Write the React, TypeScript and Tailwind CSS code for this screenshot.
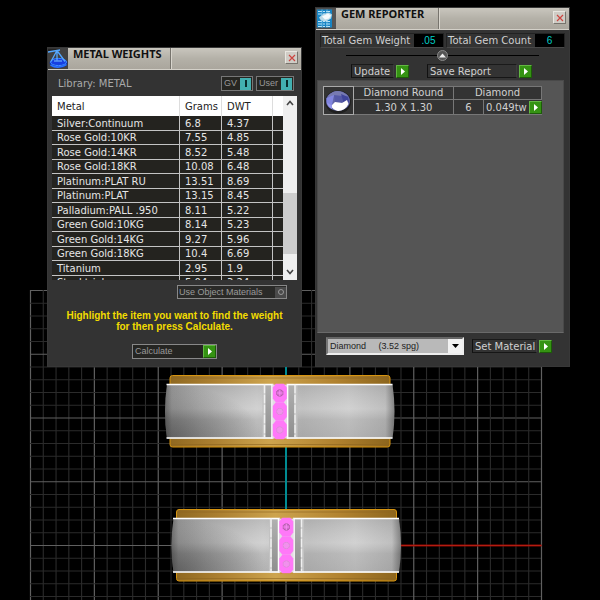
import { useState } from "react";
import type { ReactNode } from "react";

const metals = [
    { name: "Silver:Continuum", grams: "6.8", dwt: "4.37" },
    { name: "Rose Gold:10KR", grams: "7.55", dwt: "4.85" },
    { name: "Rose Gold:14KR", grams: "8.52", dwt: "5.48" },
    { name: "Rose Gold:18KR", grams: "10.08", dwt: "6.48" },
    { name: "Platinum:PLAT RU", grams: "13.51", dwt: "8.69" },
    { name: "Platinum:PLAT", grams: "13.15", dwt: "8.45" },
    { name: "Palladium:PALL .950", grams: "8.11", dwt: "5.22" },
    { name: "Green Gold:10KG", grams: "8.14", dwt: "5.23" },
    { name: "Green Gold:14KG", grams: "9.27", dwt: "5.96" },
    { name: "Green Gold:18KG", grams: "10.4", dwt: "6.69" },
    { name: "Titanium", grams: "2.95", dwt: "1.9" },
    { name: "Stocktrial", grams: "5.04", dwt: "3.24" },
];

// 40 minor cells, every fifth line is a major one
const gridLines = Array.from({ length: 41 }, (_, i) => i);

function Ring({ x, y }: { x: number; y: number }) {
    return (
        <g transform={`translate(${x} ${y})`}>
            {/* Gold rims */}
            <path d="M5.5 10V3.5Q5.5 1 8 1H223Q225.5 1 225.5 3.5V10Z" fill="url(#gold)" stroke="#d69410" />
            <path d="M5.5 64V70Q5.5 72.5 8 72.5H223Q225.5 72.5 225.5 70V64Z" fill="url(#gold)" stroke="#d69410" />
            <path d="M7 3.5H224M7 70H224" stroke="#8d6520" opacity=".6" />
            {/* Band */}
            <path d="M2.5 10Q-1.5 37 2.5 64H228Q232 37 228 10Z" fill="url(#band)" />
            <path d="M2.5 10Q-1.5 37 2.5 64H228Q232 37 228 10Z" fill="url(#bandShade)" />
            <path d="M2.5 10Q-1.5 37 2.5 64H98V10Z" fill="url(#bandCorner)" />
            <path d="M98 10H133V64H98Z" fill="#c2c2c2" />
            <path d="M101 11H107V63H101Z" fill="url(#slot)" />
            <path d="M124 11H130V63H124Z" fill="url(#slot)" />
            <path d="M2 10H228M2 63.5H228" stroke="#fff" strokeWidth="1.5" />
            <path d="M100 10V64M130.5 10V64" stroke="#f0f0f0" strokeWidth="1.5" strokeDasharray="9 1" />
            <path d="M107.5 10V64M123 10V64" stroke="#fff" strokeWidth="1.5" />
            {/* Stones */}
            <path d="M108 9.5H122.5V64.5H108Z" fill="#e4dae4" />
            <path d="M109 9.5H122M109 64.5H122" stroke="#c98b20" />
            {[18.5, 37, 55.5].map((cy, i) => (
                <g key={cy} transform={`translate(115.3 ${cy})`}>
                    <path d="M-4 -9.2H4L7 -5.5V5.5L4 9.2H-4L-7 5.5V-5.5Z" fill="#ff78f8" />
                    <path
                        d="M-1.5 -3H1.5L3 -1.5V1.5L1.5 3H-1.5L-3 1.5V-1.5Z"
                        fill={i === 0 ? "#d868d2" : "#ee94ea"}
                        stroke={i === 0 ? "#a8609f" : "#dd8ad8"}
                    />
                    <path d="M-3 0H3M0 -3V3" stroke="#f58cf0" />
                </g>
            ))}
        </g>
    );
}

function Viewport() {
    return (
        <svg className="absolute left-0 top-0" width="600" height="600" viewBox="0 0 600 600" aria-hidden="true">
            <defs>
                <linearGradient id="gold" x1="0" x2="1">
                    <stop offset="0" stopColor="#8f6820" />
                    <stop offset=".2" stopColor="#ac8031" />
                    <stop offset=".45" stopColor="#cda44e" />
                    <stop offset=".75" stopColor="#b1822f" />
                    <stop offset="1" stopColor="#8c651d" />
                </linearGradient>
                <linearGradient id="band" x1="0" x2="1">
                    <stop offset="0" stopColor="#606060" />
                    <stop offset=".03" stopColor="#939393" />
                    <stop offset=".15" stopColor="#adadad" />
                    <stop offset=".4" stopColor="#cfcfcf" />
                    <stop offset=".6" stopColor="#bdbdbd" />
                    <stop offset=".8" stopColor="#cfcfcf" />
                    <stop offset=".96" stopColor="#b8b8b8" />
                    <stop offset="1" stopColor="#6c6c6c" />
                </linearGradient>
                <linearGradient id="bandShade" x1="0" y1="0" x2="0" y2="1">
                    <stop offset="0" stopColor="#888" stopOpacity=".28" />
                    <stop offset=".45" stopColor="#ddd" stopOpacity=".2" />
                    <stop offset=".65" stopColor="#888" stopOpacity=".25" />
                    <stop offset="1" stopColor="#777" stopOpacity=".3" />
                </linearGradient>
                <radialGradient id="bandCorner" cx="0" cy="1" r="1">
                    <stop offset="0" stopColor="#333" stopOpacity=".5" />
                    <stop offset="1" stopColor="#333" stopOpacity="0" />
                </radialGradient>
                <linearGradient id="slot" x1="0" y1="0" x2="0" y2="1">
                    <stop offset="0" stopColor="#b0b0b0" />
                    <stop offset="1" stopColor="#8e8e8e" />
                </linearGradient>
            </defs>
            {gridLines.map((i) => {
                const major = i % 5 === 0;
                return (
                    <g key={i} stroke={major ? "#606060" : "#2b2b2b"} strokeWidth={major ? 1.2 : 1.1}>
                        <path d={`M${30.5 + i * 12.775} 290V600`} />
                        {i < 25 && <path d={`M30 ${290.5 + i * 12.75}H542`} />}
                    </g>
                );
            })}
            <path d="M286 367V545" stroke="#008b92" strokeWidth="2" />
            <path d="M286 545.5H541.5" stroke="#8d0b05" strokeWidth="2" />
            <path d="M286 545.5H541.5" stroke="#b51c10" strokeWidth="1" />
            <Ring x={164.5} y={374.5} />
            <Ring x={171} y={508.5} />
        </svg>
    );
}

function Window({ title, icon, className, children }: { title: string; icon: ReactNode; className: string; children: ReactNode }) {
    return (
        <section className={`absolute bg-[#333] border border-[#383838] ${className}`}>
            <header className="flex h-[22px] bg-linear-to-b from-[#c9c6be] via-[#b4b1a8] to-[#aaa69d] border-b border-[#d3d0c8]">
                <div className="w-5 shrink-0 bg-[#444]">{icon}</div>
                <h2 className="w-[103px] pl-[5px] border-r border-[#77746d] font-['Noto_Sans',sans-serif] text-[11px] leading-[11px] font-bold text-[#111] whitespace-nowrap">
                    {title}
                </h2>
                <div className="flex-1 border-l border-[#d8d5cd]" />
                <button
                    type="button"
                    aria-label="Close"
                    className="w-[13px] h-[13px] mt-[3px] mr-[3px] flex items-center justify-center bg-[#cfccc5] border border-t-[#e8e6e0] border-l-[#e8e6e0] border-r-[#77746d] border-b-[#77746d]"
                >
                    <svg width="8" height="8" viewBox="0 0 8 8">
                        <path d="M1 1L7 7M7 1L1 7" stroke="#cc4540" strokeWidth="1.2" />
                    </svg>
                </button>
            </header>
            {children}
        </section>
    );
}

function Play() {
    return (
        <span className="w-[13px] h-[13px] shrink-0 flex items-center justify-center bg-[#359313] border border-t-[#63b743] border-l-[#63b743] border-r-[#1c5c08] border-b-[#1c5c08]">
            <svg width="4" height="7" viewBox="0 0 4 7">
                <path d="M0 0L4 3.5L0 7Z" fill="#fff" />
            </svg>
        </span>
    );
}

function ActionButton({ label, labelClass }: { label: string; labelClass: string }) {
    return (
        <button type="button" className="flex items-center gap-0.5">
            <span className={`h-[14px] pl-0.5 text-left leading-[13px] whitespace-nowrap border border-t-[#1a1a1a] border-l-[#111] border-r-[#3e3e3e] border-b-[#161616] ${labelClass}`}>
                {label}
            </span>
            <Play />
        </button>
    );
}

function Toggle({ label, className }: { label: string; className: string }) {
    const [on, setOn] = useState(true);
    return (
        <button
            type="button"
            aria-pressed={on}
            onClick={() => setOn(!on)}
            className={`h-[15px] pl-0.5 flex items-center justify-between bg-[#262622] border border-[#777] font-['Liberation_Sans',Arial,sans-serif] text-[9px] text-[#999] ${className}`}
        >
            {label}
            <span className="w-[11px] h-[12px] mr-px flex items-center justify-center bg-[#42b0b0]">
                <span className="w-0.5 h-[7px] bg-[#082c2c]" />
            </span>
        </button>
    );
}

function ScalesIcon() {
    return (
        <svg width="20" height="21" viewBox="0 0 20 20">
            <rect width="20" height="20" fill="#414141" />
            <path d="M0 0H12L10 3H0Z" fill="#222" />
            <ellipse cx="10.5" cy="14.5" rx="9" ry="4.8" fill="#0d30b0" />
            <ellipse cx="10.5" cy="13.5" rx="8" ry="3.6" fill="#173fe0" stroke="#3f8cff" />
            <path d="M0 3.5L12 1.5M9 2L3 13M9 2L17 13M9 2V12" fill="none" stroke="#55a8ff" strokeWidth="1.3" />
            <path d="M2.5 16.5Q10 21 18.5 16" fill="none" stroke="#2a70ff" strokeWidth="1.5" />
            <path d="M6 12.5H14" stroke="#79c4ff" />
        </svg>
    );
}

function ReportIcon() {
    return (
        <svg width="20" height="21" viewBox="0 0 20 20">
            <rect width="20" height="20" fill="#555" />
            <path d="M1 1H16V19H1Z" fill="#1684c4" />
            <path d="M2 3H15M2 5.5H12M2 13H15M2 15.500H15M2 18H14" stroke="#b9e4f7" strokeDasharray="4 1 2 1" />
            <path d="M6 1V19M11 1V19" stroke="#83c8ea" opacity=".7" />
            <path d="M3 9L7 5.5L13 4L16 6L15 10L10 13L5 12Z" fill="#b9dae7" />
            <path d="M6 8L12 5L15 7L13 10L9 11Z" fill="#f3fafc" />
        </svg>
    );
}

function GemIcon() {
    return (
        <svg width="28" height="27" viewBox="0 0 28 27">
            <ellipse cx="14" cy="15" rx="13" ry="11.5" fill="#202020" />
            <ellipse cx="14" cy="14" rx="12" ry="10" fill="#6266aa" />
            <path d="M4 9Q13 -1 24 9L17 10L10 9L6 14Z" fill="#777ab2" />
            <path d="M2.5 11L10 8L8 18L3 17Z" fill="#8185df" />
            <path d="M10 8L18 9L22 15L11 15Z" fill="#5559a6" />
            <path d="M17 7L24 10L25 15L20 17Z" fill="#40459b" />
            <path d="M7 19L11 15L18 16L23 13L24.500 17Q21 24 14 24Q9 23 7 19Z" fill="#fff" />
            <path d="M3 16L8 18L8 22Q4 20 3 16Z" fill="#9697ec" />
        </svg>
    );
}

function MetalWeights() {
    return (
        <Window title="METAL WEIGHTS" icon={<ScalesIcon />} className="left-[47px] top-[47px] w-[255px] pb-[7px]">
            <div className="mt-1.5 px-[7px] flex items-center gap-[3px]">
                <span className="flex-1 pl-[3px] text-[#aaa]">Library: METAL</span>
                <Toggle label="GV" className="w-8" />
                <Toggle label="User" className="w-[38px]" />
            </div>
            <div className="h-[184px] mt-[5px] mx-1 flex overflow-hidden bg-[#efefef]">
                <div className="flex-1 overflow-hidden">
                    <table className="w-full table-fixed border-separate border-spacing-0 text-left">
                        <thead className="bg-white text-[#222]">
                            <tr className="h-5">
                                <th className="w-[128px] p-0 pl-[5px] font-normal border-r border-[#ddd]">Metal</th>
                                <th className="w-[42px] p-0 pl-[5px] font-normal border-r border-[#ddd]">Grams</th>
                                <th className="w-[51px] p-0 pl-[5px] font-normal border-r border-[#ddd]">DWT</th>
                                <th className="p-0" />
                            </tr>
                        </thead>
                        <tbody className="bg-[#24231f] text-[#e6e6e6]">
                            {metals.map((m) => (
                                <tr key={m.name} className="h-[15px] even:h-[14px]">
                                    <td className="p-0 pl-[5px] leading-[13px] align-bottom whitespace-nowrap border-r border-b border-[#c4c4c4]">{m.name}</td>
                                    <td className="p-0 pl-[5px] leading-[13px] align-bottom border-r border-b border-[#c4c4c4]">{m.grams}</td>
                                    <td className="p-0 pl-[5px] leading-[13px] align-bottom border-r border-b border-[#c4c4c4]">{m.dwt}</td>
                                    <td className="p-0 border-b border-[#c4c4c4]" />
                                </tr>
                            ))}
                        </tbody>
                    </table>
                </div>
                {/* Scrollbar */}
                <div className="w-[14px] flex flex-col">
                    <button type="button" aria-label="Scroll up" className="h-[14px] flex items-center justify-center">
                        <svg width="8" height="6" viewBox="0 0 8 6">
                            <path d="M1 5L4 1.5L7 5" fill="none" stroke="#444" strokeWidth="1.6" />
                        </svg>
                    </button>
                    <div className="flex-1" />
                    <div className="h-[61px] bg-[#cdcdcd]" />
                    <button type="button" aria-label="Scroll down" className="h-[26px] pt-2.5 flex items-center justify-center">
                        <svg width="8" height="6" viewBox="0 0 8 6">
                            <path d="M1 1L4 4.5L7 1" fill="none" stroke="#444" strokeWidth="1.6" />
                        </svg>
                    </button>
                </div>
            </div>
            <button
                type="button"
                className="w-[110px] h-[14px] mt-[5px] ml-auto mr-[14px] pl-px flex items-center justify-between bg-[#2a2a28] border border-[#888] font-['Liberation_Sans',Arial,sans-serif] text-[9px] text-[#9a9a9a]"
            >
                Use Object Materials
                <span className="w-[11px] h-[11px] flex items-center justify-center bg-[#4a4a4a]">
                    <span className="w-[6px] h-[6px] rounded-full border border-[#999]" />
                </span>
            </button>
            <p className="mt-[11px] text-center font-['Liberation_Sans',Arial,sans-serif] text-[10px] leading-[11px] font-bold text-[#f2dc00]">
                Highlight the item you want to find the weight
                <br />
                for then press Calculate.
            </p>
            <button
                type="button"
                className="w-[85px] h-[15px] mt-3 mx-auto pl-0.5 flex items-center justify-between bg-[#252522] border border-[#888] font-['Liberation_Sans',Arial,sans-serif] text-[9px] text-[#999]"
            >
                Calculate
                <Play />
            </button>
        </Window>
    );
}

function Total({ label, value, className }: { label: string; value: string; className: string }) {
    return (
        <div className={`h-[15px] flex border border-[#222] border-b-[#484848] ${className}`}>
            <span className="flex-1 pl-px leading-[13px] whitespace-nowrap text-[#d0d0d0]">{label}</span>
            <output className="w-[29px] bg-black text-center leading-[13px] font-['Liberation_Sans',Arial,sans-serif] text-[#00cfc8]">
                {value}
            </output>
        </div>
    );
}

function GemReporter() {
    return (
        <Window title="GEM REPORTER" icon={<ReportIcon />} className="left-[315px] top-[7px] w-[255px] pb-[11px]">
            <div className="mt-[3px] px-1 flex justify-between">
                <Total label="Total Gem Weight" value=".05" className="w-[124px]" />
                <Total label="Total Gem Count" value="6" className="w-[119px]" />
            </div>
            <div className="h-[11px] mt-[2px] mx-[30px] flex items-center justify-center">
                <span className="flex-1 h-px bg-black" />
                <button type="button" aria-label="Collapse" className="w-[11px] h-[11px] flex items-center justify-center rounded-full bg-[#555] border border-[#888]">
                    <svg width="7" height="5" viewBox="0 0 7 5">
                        <path d="M0 4.5L3.5 .5L7 4.5Z" fill="#eee" />
                    </svg>
                </button>
                <span className="flex-1 h-px bg-black" />
            </div>
            <div className="mt-[3px] pl-[35px] flex gap-[18px] text-[#d0d0d0]">
                <ActionButton label="Update" labelClass="w-[43px]" />
                <ActionButton label="Save Report" labelClass="w-[90px]" />
            </div>
            <div className="h-[253px] mt-[2px] ml-px mr-[5px] pt-[5px] pl-[5px] flex items-start bg-[#555] border border-[#494949] border-b-[#6a6a6a]">
                <div className="w-[31px] h-[29px] bg-[#333] border border-[#aaa]">
                    <GemIcon />
                </div>
                <table className="w-[188px] table-fixed border-separate border-spacing-0 bg-[#333] text-center text-[#d0d0d0]">
                    <colgroup>
                        <col className="w-[100px]" />
                        <col className="w-[30px]" />
                        <col />
                    </colgroup>
                    <tbody>
                        <tr className="h-[14px]">
                            <td className="p-0 leading-[12px] border-t border-r border-b border-[#777]">Diamond Round</td>
                            <td colSpan={2} className="p-0 leading-[12px] border-t border-r border-b border-[#777]">Diamond</td>
                        </tr>
                        <tr className="h-[15px]">
                            <td className="p-0 leading-[13px] border-r border-b border-[#777]">1.30 X 1.30</td>
                            <td className="p-0 leading-[13px] border-r border-b border-[#777]">6</td>
                            <td className="p-0 leading-[13px] border-b border-[#777]">
                                <div className="flex items-center justify-between pl-0.5">
                                    0.049tw
                                    <button type="button" aria-label="Show gem">
                                        <Play />
                                    </button>
                                </div>
                            </td>
                        </tr>
                    </tbody>
                </table>
            </div>
            <div className="mt-1 pl-[10px] flex items-center gap-2">
                <div className="relative w-[138px] h-[18px]">
                    <select
                        aria-label="Gem material"
                        className="appearance-none w-full h-full pl-0.5 bg-[#b9b9b9] border-2 border-t-[#666] border-l-[#777] border-r-[#eee] border-b-[#eee] font-['Liberation_Sans',Arial,sans-serif] text-[9px] leading-[13px] text-[#222]"
                    >
                        <option>Diamond{"\u00a0\u00a0\u00a0\u00a0\u00a0"}(3.52 spg)</option>
                    </select>
                    <span className="absolute right-0.5 top-0.5 w-[14px] h-[14px] flex items-center justify-center bg-[#f2f2f2] pointer-events-none">
                        <svg width="7" height="4" viewBox="0 0 7 4">
                            <path d="M0 0H7L3.5 4Z" fill="#000" />
                        </svg>
                    </span>
                </div>
                <div className="text-[#d0d0d0]">
                    <ActionButton label="Set Material" labelClass="w-[65px]" />
                </div>
            </div>
        </Window>
    );
}

export default function App() {
    return (
        <main className="relative min-h-screen overflow-hidden bg-black font-['DejaVu_Sans',Verdana,sans-serif] text-[10px] leading-[13px]">
            <Viewport />
            <MetalWeights />
            <GemReporter />
        </main>
    );
}
